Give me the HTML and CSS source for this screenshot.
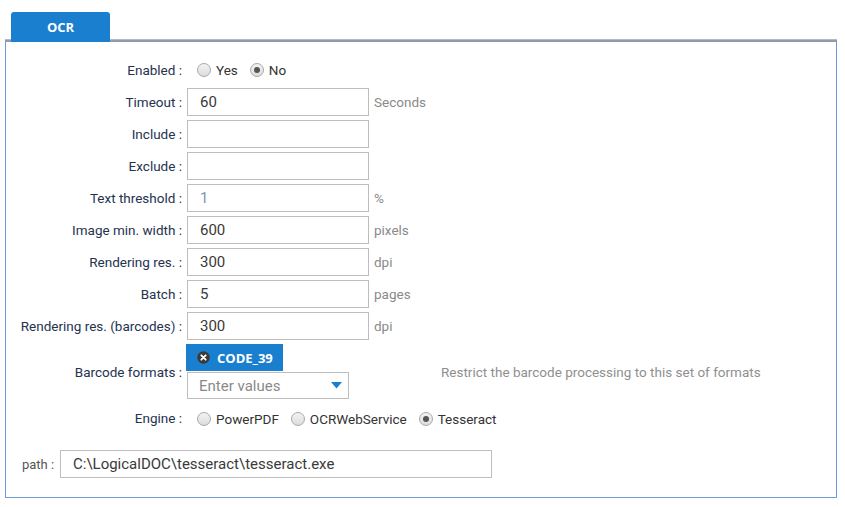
FILE: index.html
```html
<!DOCTYPE html>
<html>
<head>
<meta charset="utf-8">
<link rel="stylesheet" href="styles.css">
</head>
<body>
<div class="tabs">
  <div class="tab">OCR</div>
</div>
<div class="pane">
  <div class="form">
    <div class="label">Enabled :</div>
    <div class="field radios">
      <label class="radio"><span class="dot"></span>Yes</label>
      <label class="radio"><span class="dot on"></span>No</label>
    </div>

    <div class="label">Timeout :</div>
    <div class="field"><div class="input">60</div><span class="unit">Seconds</span></div>

    <div class="label">Include :</div>
    <div class="field"><div class="input"></div></div>

    <div class="label">Exclude :</div>
    <div class="field"><div class="input"></div></div>

    <div class="label">Text threshold :</div>
    <div class="field"><div class="input light">1</div><span class="unit">%</span></div>

    <div class="label">Image min. width :</div>
    <div class="field"><div class="input">600</div><span class="unit">pixels</span></div>

    <div class="label">Rendering res. :</div>
    <div class="field"><div class="input">300</div><span class="unit">dpi</span></div>

    <div class="label">Batch :</div>
    <div class="field"><div class="input">5</div><span class="unit">pages</span></div>

    <div class="label">Rendering res. (barcodes) :</div>
    <div class="field"><div class="input">300</div><span class="unit">dpi</span></div>

    <div class="label">Barcode formats :</div>
    <div class="field barcode">
      <div class="multi">
        <div class="chip">
          <svg class="chip-x" width="13" height="13" viewBox="0 0 13 13"><circle cx="6.5" cy="6.5" r="6.2" fill="#3a3a3a"/><path d="M4.3 4.3 L8.7 8.7 M8.7 4.3 L4.3 8.7" stroke="#fff" stroke-width="1.8" stroke-linecap="round"/></svg>
          <span>CODE_39</span>
        </div>
        <div class="select"><span>Enter values</span>
          <svg width="11" height="7" viewBox="0 0 11 7"><path d="M0 0 H11 L5.5 6.5 Z" fill="#1a7fcf"/></svg>
        </div>
      </div>
      <span class="hint">Restrict the barcode processing to this set of formats</span>
    </div>

    <div class="label">Engine :</div>
    <div class="field radios engine">
      <label class="radio"><span class="dot"></span>PowerPDF</label>
      <label class="radio"><span class="dot"></span>OCRWebService</label>
      <label class="radio"><span class="dot on"></span>Tesseract</label>
    </div>
  </div>

  <div class="path-row">
    <span class="path-label">path :</span>
    <div class="input wide">C:\LogicalDOC\tesseract\tesseract.exe</div>
  </div>
</div>
</body>
</html>
```
FILE: styles.css
```css
* { box-sizing: border-box; }
body {
  margin: 0;
  background: #fff;
  font-family: Roboto, "Liberation Sans", sans-serif;
  font-size: 13.5px;
  color: #25334f;
}
.tabs {
  padding: 12px 0 0 11px;
  height: 40px;
}
.tab {
  position: relative;
  z-index: 1;
  width: 99px;
  height: 30px;
  background: #1a7fcf;
  border-radius: 3px 3px 0 0;
  color: #fff;
  font-family: "Open Sans", sans-serif;
  font-weight: bold;
  font-size: 13px;
  text-align: center;
  line-height: 30px;
}
.pane {
  margin-left: 5px;
  width: 832px;
  height: 458px;
  border: 1px solid #6f9ad8;
  border-top: 2px solid #9a9a9a;
  box-shadow: 0 -1px 0 #9fbde6;
  padding-top: 14px;
}
.form {
  display: grid;
  grid-template-columns: 176px 1fr;
  column-gap: 5px;
  row-gap: 4px;
  align-items: center;
}
.label {
  text-align: right;
  white-space: nowrap;
}
.field {
  display: flex;
  align-items: center;
  min-height: 28px;
}
.radio {
  display: flex;
  align-items: center;
  margin-right: 2px;
  color: #333;
}
.radio .dot {
  width: 14px;
  height: 14px;
  border-radius: 50%;
  border: 1px solid #a8a8a8;
  background: linear-gradient(#f3f3f3, #dcdcdc);
  margin: 0 5px 0 10px;
  position: relative;
}
.radio .dot.on::after {
  content: "";
  position: absolute;
  left: 3px; top: 3px;
  width: 6px; height: 6px;
  border-radius: 50%;
  background: #555;
}
.input {
  width: 182px;
  height: 28px;
  border: 1px solid #bdbdbd;
  padding-left: 12px;
  line-height: 26px;
  font-size: 15px;
  color: #3a3a3a;
  background: #fff;
}
.input.light { color: #7c95b4; }
.unit {
  color: #8a8a8a;
  margin-left: 5px;
}
.multi {
  display: flex;
  flex-direction: column;
  align-items: flex-start;
}
.chip {
  width: 97px;
  height: 27px;
  margin-left: -1px;
  background: #1a7fcf;
  color: #fff;
  display: flex;
  align-items: center;
  font-family: "Open Sans", sans-serif;
  font-weight: bold;
  font-size: 13px;
}
.chip-x { margin: 0 7px 0 11px; }
.select {
  width: 162px;
  height: 27px;
  margin-top: 1px;
  border: 1px solid #bdbdbd;
  display: flex;
  align-items: center;
  justify-content: space-between;
  padding: 0 6px 0 11px;
  font-size: 15px;
  color: #8a8a8a;
}
.hint {
  color: #8f8f8f;
  margin-left: 92px;
}
.engine { margin-top: 2px; }
.path-row {
  display: flex;
  align-items: center;
  margin-top: 17px;
  padding-left: 16px;
}
.path-label {
  color: #555;
  font-size: 13px;
  width: 38px;
}
.input.wide { width: 432px; }
```
